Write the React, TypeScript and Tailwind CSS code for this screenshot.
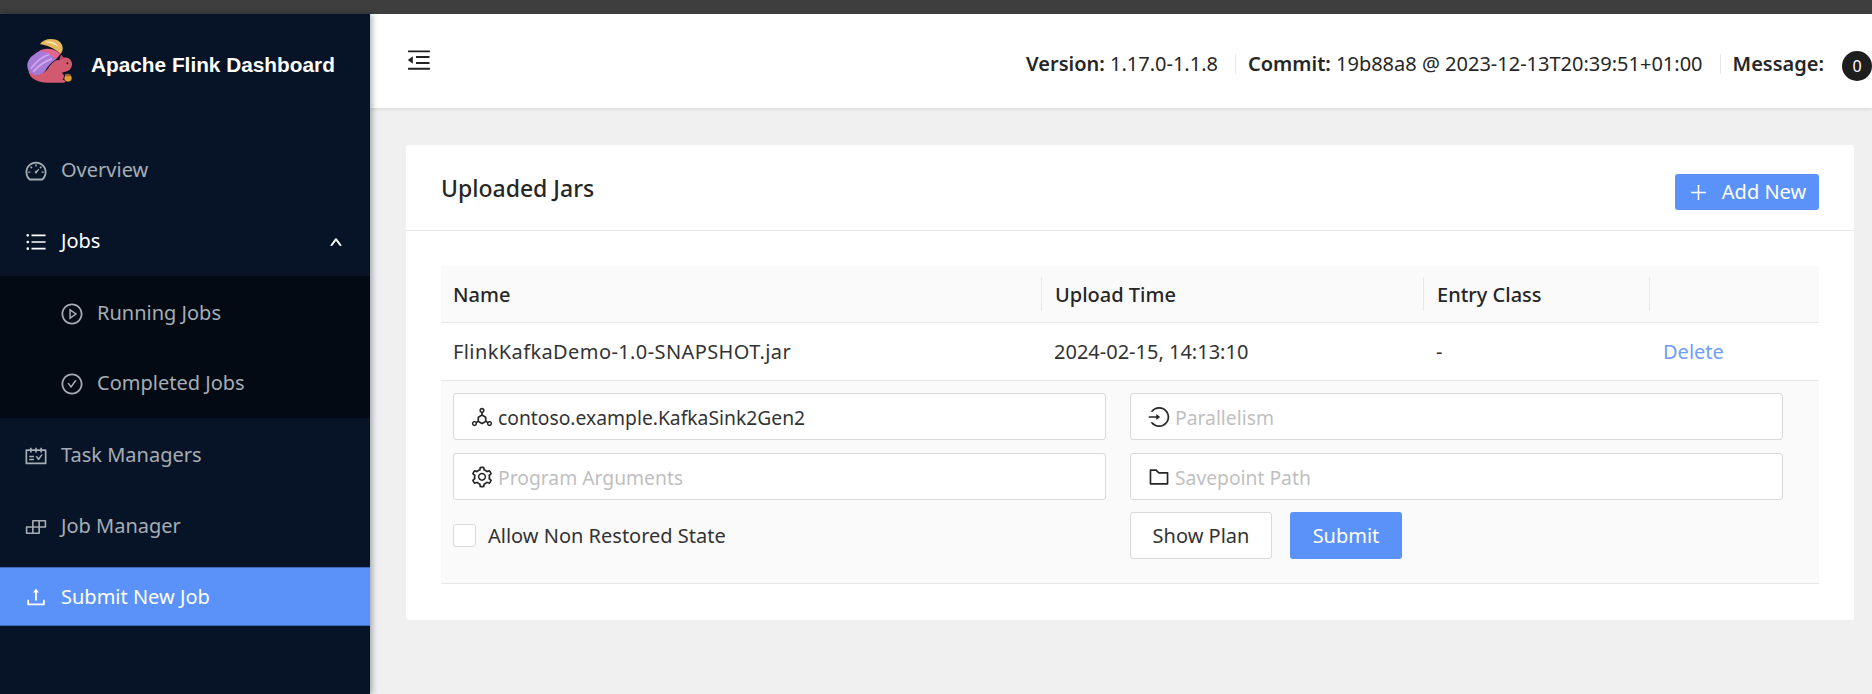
import React from 'react';
import {
  AiOutlineBuild,
  AiOutlineCheckCircle,
  AiOutlineDashboard,
  AiOutlineDeploymentUnit,
  AiOutlineFolder,
  AiOutlineLogin,
  AiOutlineMenuFold,
  AiOutlinePlayCircle,
  AiOutlinePlus,
  AiOutlineSchedule,
  AiOutlineSetting,
  AiOutlineUnorderedList,
  AiOutlineUp,
  AiOutlineUpload,
} from 'react-icons/ai';

// --- Logo ---
const FlinkLogo = () => (
  <svg viewBox="50 44 142 142" className="w-[47px] h-[47px]">
    {/* body */}
    <path d="M58 150C60 175 90 186 120 185L165 185C172 183 170 178 160 176C168 168 165 160 158 155C175 152 190 142 187 125C185 112 172 106 160 112L150 118C140 112 125 130 118 140C108 158 85 165 58 150Z" fill="#d2596f" />
    <circle cx="168" cy="130" r="21" fill="#d2596f" />
    <path d="M150 118L156 100L166 112Z" fill="#c04e66" />
    {/* tail */}
    <path d="M58 150C48 130 58 110 75 100C85 90 100 85 115 85C125 90 135 100 140 115C125 125 115 135 108 150C95 165 72 168 58 150Z" fill="#a87ad8" />
    <path d="M65 142C80 122 95 108 120 100M72 152C85 137 105 120 128 113" stroke="#d3a8ee" strokeWidth="5" fill="none" />
    <path d="M88 90C105 78 135 80 155 98C148 105 145 112 140 115C130 100 110 90 88 90Z" fill="#e2648c" />
    <path d="M92 68C105 50 135 50 150 60C162 70 165 85 155 98C140 85 118 72 92 68Z" fill="#e8b95a" />
    <path d="M108 62C122 58 138 62 148 76C135 68 122 64 108 62Z" fill="#f8efd0" />
    {/* nut + eye */}
    <ellipse cx="177" cy="172" rx="11" ry="10" fill="#dfa02f" />
    <ellipse cx="176" cy="162" rx="9" ry="4" fill="#a5622c" />
    <circle cx="175" cy="126" r="3" fill="#3a1020" />
  </svg>
);

type NavItem = {
  label: string;
  icon: React.ReactNode;
};

const SideLink = ({ label, icon }: NavItem) => (
  <div className="h-[59px] my-[6px] pl-[24px] flex items-center gap-[13px] text-[#a6adb4]">
    <span className="text-[24px]">{icon}</span>
    <span className="pb-[2px]">{label}</span>
  </div>
);

const SubLink = ({ label, icon }: NavItem) => (
  <div className="h-[59px] pl-[60px] flex items-center gap-[13px] text-[#a6adb4]">
    <span className="text-[24px]">{icon}</span>
    <span className="pb-[2px]">{label}</span>
  </div>
);

const Sidebar = () => (
  <aside className="w-[370px] shrink-0 flex flex-col bg-[#071428] shadow-[2px_0_6px_rgba(0,21,41,0.35)] z-20 text-[20px]">
    <div className="h-[121px] shrink-0 pl-[26px] pt-[22px] flex items-start gap-[18px]">
      <FlinkLogo />
      <h1 className="mt-[15px] font-['Liberation_Sans',sans-serif] font-bold text-[20.8px] leading-[28px] text-white">
        Apache Flink Dashboard
      </h1>
    </div>

    <SideLink label="Overview" icon={<AiOutlineDashboard />} />
    <div className="h-[59px] mt-[6px] mb-[5px] pl-[24px] pr-[27px] flex items-center gap-[13px] text-white">
      <span className="text-[24px]"><AiOutlineUnorderedList /></span>
      <span className="pb-[2px]">Jobs</span>
      <AiOutlineUp className="ml-auto text-[14px] stroke-[70px]" />
    </div>

    <div className="bg-[#030a14] h-[142px] pt-[8px] flex flex-col gap-[11px]">
      <SubLink label="Running Jobs" icon={<AiOutlinePlayCircle />} />
      <SubLink label="Completed Jobs" icon={<AiOutlineCheckCircle />} />
    </div>

    <div className="mt-[2px] flex flex-col">
      <SideLink label="Task Managers" icon={<AiOutlineSchedule />} />
      <SideLink label="Job Manager" icon={<AiOutlineBuild />} />
    </div>
    <div className="h-[59px] mt-[5px] pl-[24px] flex items-center gap-[13px] text-white bg-[#5b92fa] border-y border-[#3d6cb8]">
      <span className="text-[24px]"><AiOutlineUpload /></span>
      <span>Submit New Job</span>
    </div>
  </aside>
);

const Separator = () => <span className="w-px h-[20px] bg-[#e8e8e8] ml-[17px] mr-[12px]" />;

const Header = () => (
  <header className="h-[94px] shrink-0 bg-white shadow-[0_1px_4px_rgba(0,21,41,0.12)] z-10 flex items-center pl-[35px] text-[20px] text-[#262626]">
    <AiOutlineMenuFold className="text-[28px] -mt-[3px] text-[#222]" />
    <div className="ml-auto mt-[5px] flex items-center">
      <span><b className="font-semibold">Version:</b> 1.17.0-1.1.8</span>
      <Separator />
      <span><b className="font-semibold">Commit:</b> 19b88a8 @ 2023-12-13T20:39:51+01:00</span>
      <Separator />
      <b className="font-semibold">Message:</b>
      <span className="ml-[18px] mt-[4px] w-[30px] h-[30px] rounded-full bg-[#1e1e1e] text-white text-[16px] flex items-center justify-center">0</span>
    </div>
  </header>
);

type FieldProps = {
  icon: React.ReactNode;
  placeholder?: string;
  value?: string;
};

const Field = ({ icon, placeholder, value }: FieldProps) => (
  <div className="h-[47px] flex items-center gap-[4px] pl-[16px] pr-[17px] bg-white border border-[#d9d9d9] rounded-[3px] text-[#262626]">
    <span className="text-[24px] shrink-0">{icon}</span>
    <input
      readOnly
      value={value}
      placeholder={placeholder}
      className="w-full pt-[3px] bg-transparent outline-none text-[19.3px] text-[#333] placeholder:text-[#bfbfbf]"
    />
  </div>
);

const JarsTable = () => (
  <div className="text-[20px] text-[#333]">
    {/* Head */}
    <div className="grid grid-cols-[600px_382px_226px_170px] h-[57px] items-center bg-[#fafafa] border-b border-[#e8e8e8] font-medium text-[#262626]">
      <div className="pl-[12px] pt-[1px]">Name</div>
      <div className="pl-[13px] border-l border-[#e8e8e8] h-[34px] leading-[36px]">Upload Time</div>
      <div className="pl-[13px] border-l border-[#e8e8e8] h-[34px] leading-[36px]">Entry Class</div>
      <div className="border-l border-[#e8e8e8] h-[34px]" />
    </div>

    {/* Row */}
    <div className="grid grid-cols-[600px_382px_226px_170px] h-[58px] items-center border-b border-[#e8e8e8]">
      <div className="pl-[12px] pt-[1px] tracking-[0.4px]">FlinkKafkaDemo-1.0-SNAPSHOT.jar</div>
      <div className="pl-[13px] pt-[1px]">2024-02-15, 14:13:10</div>
      <div className="pl-[13px] pt-[1px]">-</div>
      <div className="pl-[14px] pt-[1px] text-[#6f9dfb]">Delete</div>
    </div>

    {/* Expanded form */}
    <div className="h-[203px] bg-[#fafafa] border-b border-[#e8e8e8] pl-[12px] pr-[36px] pt-[12px]">
      <div className="grid grid-cols-2 gap-x-[24px] gap-y-[13px]">
        <Field icon={<AiOutlineDeploymentUnit />} value="contoso.example.KafkaSink2Gen2" />
        <Field icon={<AiOutlineLogin />} placeholder="Parallelism" />
        <Field icon={<AiOutlineSetting />} placeholder="Program Arguments" />
        <Field icon={<AiOutlineFolder />} placeholder="Savepoint Path" />
        <label className="flex items-center gap-[12px] h-[47px] text-[#333] -mt-[1px]">
          <span className="w-[23px] h-[23px] bg-white border border-[#d9d9d9] rounded-[3px]" />
          <span className="pt-[1px]">Allow Non Restored State</span>
        </label>
        <div className="flex gap-[18px] -mt-[1px]">
          <button className="w-[142px] h-[47px] pt-[1px] bg-white border border-[#d9d9d9] rounded-[3px] text-[#333]">Show Plan</button>
          <button className="w-[112px] h-[47px] pt-[1px] bg-[#5b92fa] rounded-[3px] text-white">Submit</button>
        </div>
      </div>
    </div>
  </div>
);

export default function App() {
  return (
    <div className="w-[1872px] h-[694px] overflow-hidden flex flex-col font-['Noto_Sans',sans-serif] bg-[#f0f0f0]">
      <div className="h-[14px] shrink-0 bg-[#3e3e3e]" />
      <div className="flex flex-1 min-h-0">
        <Sidebar />
        <main className="flex-1 flex flex-col min-w-0">
          <Header />
          <div className="pt-[37px] pl-[36px] pr-[18px]">
            <section className="bg-white rounded-[3px] h-[475px]">
              <div className="h-[86px] pl-[35px] pr-[35px] pt-[9px] flex items-center justify-between border-b border-[#e8e8e8]">
                <h2 className="text-[23px] -mt-[7px] font-medium text-[#262626]">Uploaded Jars</h2>
                <button className="w-[144px] h-[36px] bg-[#5b92fa] rounded-[3px] text-white text-[20px] flex items-center justify-center gap-[13px]">
                  <AiOutlinePlus className="text-[21px]" />
                  Add New
                </button>
              </div>
              <div className="pt-[35px] px-[35px]">
                <JarsTable />
              </div>
            </section>
          </div>
        </main>
      </div>
    </div>
  );
}
